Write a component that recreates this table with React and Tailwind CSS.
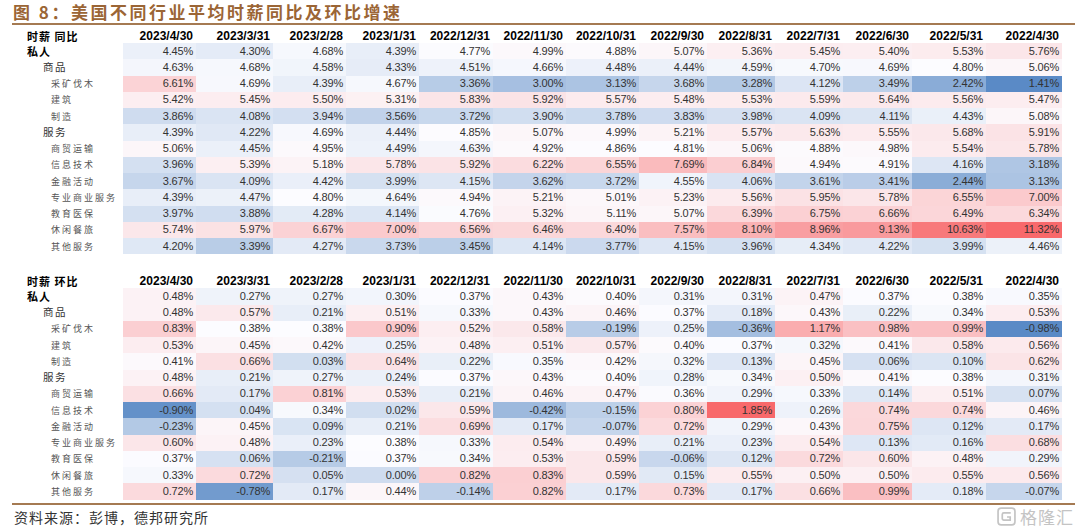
import React from 'react';

const cols = ['2023/4/30', '2023/3/31', '2023/2/28', '2023/1/31', '2022/12/31', '2022/11/30', '2022/10/31', '2022/9/30', '2022/8/31', '2022/7/31', '2022/6/30', '2022/5/31', '2022/4/30'];

const labels = [
	['私人', 0], ['商品', 1], ['采矿伐木', 2], ['建筑', 2], ['制造', 2], ['服务', 1], ['商贸运输', 2],
	['信息技术', 2], ['金融活动', 2], ['专业商业服务', 2], ['教育医保', 2], ['休闲餐旅', 2], ['其他服务', 2],
];

const yoy = [
	[4.45, 4.30, 4.68, 4.39, 4.77, 4.99, 4.88, 5.07, 5.36, 5.45, 5.40, 5.53, 5.76],
	[4.63, 4.68, 4.58, 4.33, 4.51, 4.66, 4.48, 4.44, 4.59, 4.70, 4.69, 4.80, 5.06],
	[6.61, 4.69, 4.39, 4.67, 3.36, 3.00, 3.13, 3.68, 3.28, 4.12, 3.49, 2.42, 1.41],
	[5.42, 5.45, 5.50, 5.31, 5.83, 5.92, 5.57, 5.48, 5.53, 5.59, 5.64, 5.56, 5.47],
	[3.86, 4.08, 3.94, 3.56, 3.72, 3.90, 3.78, 3.83, 3.98, 4.09, 4.11, 4.43, 5.08],
	[4.39, 4.22, 4.69, 4.44, 4.85, 5.07, 4.99, 5.21, 5.57, 5.63, 5.55, 5.68, 5.91],
	[5.06, 4.45, 4.95, 4.49, 4.63, 4.92, 4.86, 4.81, 5.06, 4.88, 4.98, 5.54, 5.78],
	[3.96, 5.39, 5.18, 5.78, 5.92, 6.22, 6.55, 7.69, 6.84, 4.94, 4.91, 4.16, 3.18],
	[3.67, 4.09, 4.42, 3.99, 4.15, 3.62, 3.72, 4.55, 4.06, 3.61, 3.41, 2.44, 3.13],
	[4.39, 4.47, 4.80, 4.64, 4.94, 5.21, 5.01, 5.23, 5.56, 5.95, 5.78, 6.55, 7.00],
	[3.97, 3.88, 4.28, 4.14, 4.76, 5.32, 5.11, 5.07, 6.39, 6.75, 6.66, 6.49, 6.34],
	[5.74, 5.97, 6.67, 7.00, 6.56, 6.46, 6.40, 7.57, 8.10, 8.96, 9.13, 10.63, 11.32],
	[4.20, 3.39, 4.27, 3.73, 3.45, 4.14, 3.77, 4.15, 3.96, 4.34, 4.22, 3.99, 4.46],
];

const mom = [
	[0.48, 0.27, 0.27, 0.30, 0.37, 0.43, 0.40, 0.31, 0.31, 0.47, 0.37, 0.38, 0.35],
	[0.48, 0.57, 0.21, 0.51, 0.33, 0.43, 0.46, 0.37, 0.18, 0.43, 0.22, 0.34, 0.53],
	[0.83, 0.38, 0.38, 0.90, 0.52, 0.58, -0.19, 0.25, -0.36, 1.17, 0.98, 0.99, -0.98],
	[0.53, 0.45, 0.42, 0.25, 0.48, 0.51, 0.57, 0.40, 0.37, 0.32, 0.41, 0.58, 0.56],
	[0.41, 0.66, 0.03, 0.64, 0.22, 0.35, 0.42, 0.32, 0.13, 0.45, 0.06, 0.10, 0.62],
	[0.48, 0.21, 0.27, 0.24, 0.37, 0.43, 0.40, 0.28, 0.34, 0.50, 0.41, 0.38, 0.31],
	[0.66, 0.17, 0.81, 0.53, 0.21, 0.46, 0.47, 0.36, 0.29, 0.33, 0.14, 0.51, 0.07],
	[-0.90, 0.04, 0.34, 0.02, 0.59, -0.42, -0.15, 0.80, 1.85, 0.26, 0.74, 0.74, 0.46],
	[-0.23, 0.45, 0.09, 0.21, 0.69, 0.17, -0.07, 0.72, 0.29, 0.43, 0.75, 0.12, 0.17],
	[0.60, 0.48, 0.23, 0.38, 0.33, 0.54, 0.49, 0.21, 0.23, 0.54, 0.13, 0.16, 0.68],
	[0.37, 0.06, -0.21, 0.37, 0.34, 0.53, 0.59, -0.06, 0.12, 0.72, 0.60, 0.48, 0.29],
	[0.33, 0.72, 0.05, 0.00, 0.82, 0.83, 0.59, 0.15, 0.55, 0.50, 0.50, 0.55, 0.56],
	[0.72, -0.78, 0.17, 0.44, -0.14, 0.82, 0.17, 0.73, 0.17, 0.66, 0.99, 0.18, -0.07],
];

// excel style 3-colour scale: min blue, median white, max red
const LOW = [90, 138, 198];
const MID = [252, 252, 255];
const HIGH = [248, 105, 107];

const mix = (a, b, t) => a.map((v, i) => Math.round(v + (b[i] - v) * t));

const makeScale = (data) => {
	const flat = data.flat().sort((a, b) => a - b);
	const min = flat[0];
	const max = flat[flat.length - 1];
	const mid = flat[Math.floor(flat.length / 2)];
	return (v) => {
		const c = v <= mid ? mix(LOW, MID, (v - min) / (mid - min)) : mix(MID, HIGH, (v - mid) / (max - mid));
		return `rgb(${c[0]},${c[1]},${c[2]})`;
	};
};

const grid = 'grid grid-cols-[123px_73px_77px_73px_73px_74px_73px_73px_68px_68px_68px_69px_74px_76px]';

const labelClass = {
	0: 'pl-[27px] text-[11px] font-bold text-black tracking-[1px]',
	1: 'pl-[43px] text-[10.5px] text-[#333] tracking-[1.5px]',
	2: 'pl-[51px] text-[9px] text-[#555] tracking-[2px]',
};

const HeatTable = ({ title, data }) => {
	const scale = makeScale(data);
	return (
		<div>
			<div className={`${grid} h-[14px] items-center`}>
				<div className="pl-[27px] text-[11px] font-bold text-black tracking-[1px] leading-none" style={{ fontFamily: '"Noto Sans CJK SC", sans-serif' }}>
					{title}
				</div>
				{cols.map((c) => (
					<div key={c} className="text-right pr-[3px] text-[12px] font-bold text-black leading-none">{c}</div>
				))}
			</div>
			{data.map((row, r) => (
				<div key={r} className={`${grid} h-[16.25px]`}>
					<div className={`flex items-center leading-none ${labelClass[labels[r][1]]}`} style={{ fontFamily: '"Noto Sans CJK SC", sans-serif' }}>
						{labels[r][0]}
					</div>
					{row.map((v, i) => (
						<div
							key={i}
							className="flex items-center justify-end pr-[3px] text-[11px] text-[#333] leading-none tracking-[-0.2px]"
							style={{ backgroundColor: scale(v) }}
						>
							{v.toFixed(2)}%
						</div>
					))}
				</div>
			))}
		</div>
	);
};

const Watermark = () => (
	<div className="flex items-center gap-[4px] text-[#c4c4c4]">
		<svg width="19" height="19" viewBox="0 0 18 18" fill="none" stroke="#c4c4c4" strokeWidth="1.6">
			<rect x="1" y="1" width="16" height="16" rx="3" />
			<path d="M13 5.5H6.5a1.5 1.5 0 0 0-1.5 1.5v4a1.5 1.5 0 0 0 1.5 1.5H12.5V9.5H9.5" />
		</svg>
		<span className="text-[17px] tracking-[1px] leading-none" style={{ fontFamily: '"Noto Sans CJK SC", sans-serif' }}>格隆汇</span>
	</div>
);

export default function App() {
	return (
		<div className="w-[1080px] h-[531px] bg-white overflow-hidden" style={{ fontFamily: '"Liberation Sans", Arial, sans-serif' }}>
			<div className="mx-[12px] w-[1063px] h-[25px] border-b-2 border-[#a57a52] flex items-center">
				<div className="pl-[1px] text-[17px] font-bold text-[#9b6535] tracking-[2.5px] leading-none" style={{ fontFamily: '"Noto Sans CJK SC", sans-serif' }}>
					图 8：美国不同行业平均时薪同比及环比增速
				</div>
			</div>
			<div className="mt-[4px]">
				<HeatTable title="时薪 同比" data={yoy} />
			</div>
			<div className="mt-[20px]">
				<HeatTable title="时薪 环比" data={mom} />
			</div>
			<div className="mx-[12px] w-[1063px] mt-[3px] border-t-2 border-[#a57a52]" />
			<div className="flex items-center justify-between pl-[14px] pr-[6px] h-[24px]">
				<div className="text-[14px] text-[#333] tracking-[1px] leading-none" style={{ fontFamily: '"Noto Sans CJK SC", sans-serif' }}>
					资料来源：彭博，德邦研究所
				</div>
				<Watermark />
			</div>
		</div>
	);
}
